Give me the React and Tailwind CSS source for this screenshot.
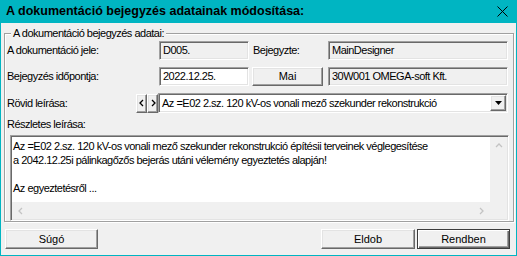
import React from "react";

// classic win32 bevels
const sunken =
  "border border-t-[#a0a0a0] border-l-[#a0a0a0] border-b-white border-r-white shadow-[inset_1px_1px_0_#696969,inset_-1px_-1px_0_#e3e3e3]";
const raised =
  "border border-t-white border-l-white border-b-[#696969] border-r-[#696969] shadow-[inset_-1px_-1px_0_#a0a0a0,inset_1px_1px_0_#e3e3e3]";

const Chevron = ({ dir, color = "#c3c3c3" }) => {
  const paths = {
    up: "M1 5 L4 2 L7 5",
    left: "M5 1 L2 4 L5 7",
    right: "M3 1 L6 4 L3 7",
  };
  return (
    <svg width="8" height="8" viewBox="0 0 8 8">
      <path d={paths[dir]} fill="none" stroke={color} strokeWidth="1.3" />
    </svg>
  );
};

const Button = ({ children, className = "", isDefault = false }) => (
  <div
    className={`flex items-center justify-center bg-[#f0f0f0] ${
      isDefault
        ? "border border-[#3c3c3c] shadow-[inset_1px_1px_0_white,inset_-1px_-1px_0_#696969,inset_-2px_-2px_0_#a0a0a0]"
        : raised
    } ${className}`}
  >
    {children}
  </div>
);

export default function App() {
  return (
    <div
      className="w-[517px] h-[256px] flex flex-col bg-[#00b5c2] text-[11px] tracking-[-0.5px] text-black overflow-hidden"
      style={{ fontFamily: '"Liberation Sans", Arial, sans-serif' }}
    >
      {/* TITLE BAR */}
      <div className="h-[23px] shrink-0 flex items-center justify-between pl-[6px] pr-[9px]">
        <span className="text-[12.5px] font-bold tracking-normal">
          A dokumentáció bejegyzés adatainak módosítása:
        </span>
        <svg width="11" height="11" viewBox="0 0 11 11">
          <path d="M0.5 0.5 L10.5 10.5 M10.5 0.5 L0.5 10.5" stroke="#000" strokeWidth="1" />
        </svg>
      </div>

      {/* BODY */}
      <div className="flex-1 mx-px mb-px bg-[#f0f0f0] flex flex-col">
        {/* GROUPBOX */}
        <div className="relative ml-[3px] mt-[10px] w-[510px] h-[189px] border border-[#a0a0a0] shadow-[inset_1px_1px_0_white,1px_1px_0_white] pt-[7px] pl-[2px]">
          <span className="absolute -top-[7px] left-[6px] px-[2px] bg-[#f0f0f0] leading-[13px]">
            A dokumentáció bejegyzés adatai:
          </span>

          {/* ROW 1 */}
          <div className="flex items-center h-[19px]">
            <span className="w-[152px]">A dokumentáció jele:</span>
            <div className={`w-[90px] h-full flex items-center pl-[3px] bg-[#f0f0f0] ${sunken}`}>
              D005.
            </div>
            <span className="w-[75px] ml-[4px]">Bejegyzte:</span>
            <div className={`w-[180px] h-full flex items-center pl-[3px] bg-[#f0f0f0] ${sunken}`}>
              MainDesigner
            </div>
          </div>

          {/* ROW 2 */}
          <div className="flex items-center h-[19px] mt-[7px]">
            <span className="w-[152px]">Bejegyzés időpontja:</span>
            <div className={`w-[90px] h-full flex items-center pl-[3px] bg-white ${sunken}`}>
              2022.12.25.
            </div>
            <Button className="w-[71px] h-full ml-[3px] tracking-normal">Mai</Button>
            <div className={`w-[180px] h-full ml-[5px] flex items-center pl-[3px] bg-[#f0f0f0] ${sunken}`}>
              30W001 OMEGA-soft Kft.
            </div>
          </div>

          {/* ROW 3 */}
          <div className="flex items-center h-[20px] mt-[7px]">
            <span className="w-[129px]">Rövid leírása:</span>
            <Button className="w-[11px] h-[19px]">
              <Chevron dir="left" color="#000" />
            </Button>
            <Button className="w-[11px] h-[19px]">
              <Chevron dir="right" color="#000" />
            </Button>
            <div className={`w-[350px] h-full flex items-center justify-between pl-[3px] pr-px bg-white ${sunken}`}>
              <span>Az =E02 2.sz. 120 kV-os vonali mező szekunder rekonstrukció</span>
              <Button className="w-[16px] h-[16px]">
                <svg width="7" height="4" viewBox="0 0 7 4">
                  <path d="M0 0 H7 L3.5 4 Z" fill="#000" />
                </svg>
              </Button>
            </div>
          </div>

          {/* DETAILED */}
          <div className="mt-[4px] h-[14px] leading-[14px]">Részletes leírása:</div>
          <div className={`ml-[3px] mt-[4px] w-[499px] h-[86px] bg-[#f0f0f0] p-px ${sunken}`}>
            <div className="flex h-[65px]">
              <div className="flex-1 bg-white pl-px pt-[2px] leading-[14px]">
                <p>Az =E02 2.sz. 120 kV-os vonali mező szekunder rekonstrukció építésii terveinek véglegesítése</p>
                <p>a 2042.12.25i pálinkagőzős bejerás utáni vélemény egyeztetés alapján!</p>
                <p>&nbsp;</p>
                <p>Az egyeztetésről ...</p>
              </div>
              <div className="w-[17px] flex justify-center pt-[5px]">
                <Chevron dir="up" />
              </div>
            </div>
            <div className="flex h-[17px] items-center">
              <div className="flex-1 flex items-center justify-between px-[5px]">
                <Chevron dir="left" />
                <Chevron dir="right" />
              </div>
              <div className="w-[17px]" />
            </div>
          </div>
        </div>

        {/* BUTTONS */}
        <div className="flex items-center mt-[7px] pl-[4px] tracking-normal">
          <Button className="w-[93px] h-[20px]">Súgó</Button>
          <Button className="w-[94px] h-[20px] ml-auto">Eldob</Button>
          <Button isDefault className="w-[93px] h-[20px] ml-[2px] mr-[6px]">
            Rendben
          </Button>
        </div>
      </div>
    </div>
  );
}
